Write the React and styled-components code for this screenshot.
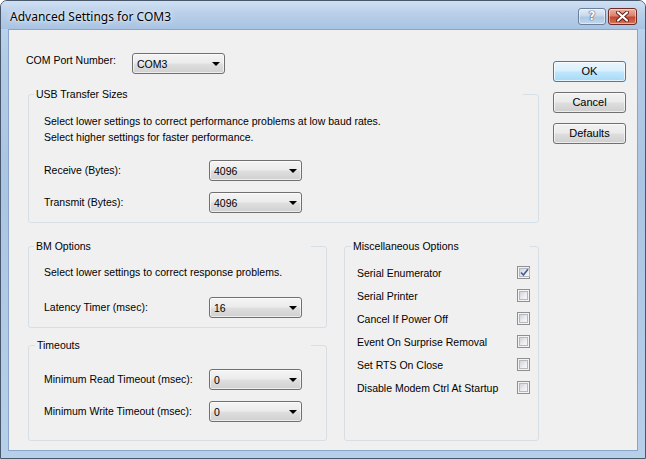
import React from "react";
import styled, { createGlobalStyle } from "styled-components";

const Global = createGlobalStyle`
  html, body { margin: 0; padding: 0; background: #ffffff; }
  body { font-family: "Liberation Sans", Arial, sans-serif; font-size: 10.5px; color: #000; }
  * { box-sizing: border-box; }
`;

const Window = styled.div`
  width: 646px;
  height: 459px;
  display: flex;
  flex-direction: column;
  border: 1px solid #48576a;
  border-radius: 7px 7px 0 0;
  background: linear-gradient(180deg, #c6d9ef 0%, #b2cbe7 12%, #aac5e3 40%, #b8cfea 100%);
  overflow: hidden;
`;

const TitleBar = styled.div`
  height: 28px;
  display: flex;
  align-items: center;
  justify-content: space-between;
  padding: 0 8px 0 9px;
  background: linear-gradient(180deg, #cfe0f3 0%, #b9cfe9 45%, #a8c3e2 100%);
`;

const Title = styled.span`
  font-family: "Noto Sans", "Liberation Sans", sans-serif;
  font-size: 12px;
  color: #000;
  text-shadow: 0 0 6px rgba(255, 255, 255, 0.95), 0 0 2px rgba(255, 255, 255, 0.8);
  margin-top: 3px;
`;

const Caption = styled.div`
  display: flex;
  gap: 2px;
  margin-top: 2px;
`;

const CapBtn = styled.div`
  width: ${(p) => p.$w}px;
  height: 17px;
  border-radius: 3px;
  border: 1px solid ${(p) => (p.$red ? "#6e2b24" : "#6a7f9b")};
  background: ${(p) =>
    p.$red
      ? "linear-gradient(180deg, #eab1a4 0%, #d88370 45%, #c3472f 55%, #d0765f 100%)"
      : "linear-gradient(180deg, #e4edf7 0%, #c9d9ec 45%, #aec6e2 55%, #c4d7ec 100%)"};
  box-shadow: inset 0 0 0 1px rgba(255, 255, 255, 0.45);
  display: flex;
  align-items: center;
  justify-content: center;
`;

const HelpGlyph = styled.span`
  font-family: "DejaVu Sans", sans-serif;
  font-weight: bold;
  font-size: 12px;
  line-height: 12px;
  color: #ffffff;
  text-shadow: 0 0 1px #3b4f6b, 0 0 1px #3b4f6b, 0 0 1px #3b4f6b;
`;

const Client = styled.div`
  flex: 1;
  margin: 0 7px 7px 7px;
  border: 1px solid #8aa6c6;
  background: #f0f0f0;
  display: flex;
  padding: 23px 0 9px 17px;
`;

const Main = styled.div`
  width: 513px;
  display: flex;
  flex-direction: column;
`;

const PortRow = styled.div`
  display: flex;
  align-items: flex-start;
  height: 21px;
`;

const Label = styled.span`
  display: inline-block;
  width: ${(p) => p.$w}px;
  flex-shrink: 0;
  line-height: 13px;
  padding-top: ${(p) => p.$top || 0}px;
`;

const Combo = styled.div`
  width: ${(p) => p.$w || 93}px;
  height: 21px;
  border: 1px solid #707070;
  border-radius: 3px;
  background: linear-gradient(180deg, #f4f4f4 0%, #ececec 45%, #dedede 55%, #d0d0d0 100%);
  box-shadow: inset 0 0 0 1px rgba(255, 255, 255, 0.6);
  display: flex;
  align-items: center;
  justify-content: space-between;
  padding: 0 4px 0 4px;
  flex-shrink: 0;
`;

const ComboText = styled.span`
  line-height: 13px;
  padding-top: 1px;
`;

const Arrow = styled.span`
  width: 0;
  height: 0;
  border-left: 4px solid transparent;
  border-right: 4px solid transparent;
  border-top: 4px solid #000;
`;

const Group = styled.div`
  border: 1px solid #d5dfe5;
  border-radius: 3px;
  margin-top: ${(p) => p.$mt || 0}px;
  padding: 0 ${(p) => p.$pr || 15}px 0 ${(p) => p.$pl || 15}px;
  display: flex;
  flex-direction: column;
  ${(p) => (p.$grow ? "flex: 1;" : "")}
  ${(p) => (p.$w ? `width: ${p.$w}px; flex-shrink: 0;` : "")}
  ${(p) => (p.$pb ? `padding-bottom: ${p.$pb}px;` : "")}
`;

const Legend = styled.span`
  display: table;
  margin: -7px 0 0 ${(p) => p.$ml || -8}px;
  padding: 0 2px;
  line-height: 13px;
  background: #f0f0f0;
`;

const Desc = styled.div`
  margin-top: ${(p) => p.$mt || 0}px;
  line-height: ${(p) => p.$lh || 13}px;
`;

const FieldRow = styled.div`
  display: flex;
  align-items: center;
  height: 21px;
  margin-top: ${(p) => p.$mt || 0}px;
`;

const USBGroup = styled(Group)`
  margin-left: 2px;
`;

const Lower = styled.div`
  flex: 1;
  display: flex;
  gap: 17px;
  margin: 23px 0 0 2px;
`;

const LeftCol = styled.div`
  width: 299px;
  display: flex;
  flex-direction: column;
`;

const CheckRow = styled.div`
  height: 23px;
  display: flex;
  align-items: center;
  justify-content: space-between;
`;

const CheckList = styled.div`
  margin-top: 8px;
  display: flex;
  flex-direction: column;
`;

const Box = styled.span`
  width: 13px;
  height: 13px;
  border: 1px solid #8e8f8f;
  background: #f4f4f4;
  padding: 1px;
  display: flex;
`;

const BoxInner = styled.span`
  flex: 1;
  border: 1px solid #b5b9be;
  background: linear-gradient(135deg, #d1d4d8 0%, #eceef0 60%, #f7f7f7 100%);
  display: flex;
  align-items: center;
  justify-content: center;
`;

const ButtonCol = styled.div`
  margin: 8px 0 0 14px;
  display: flex;
  flex-direction: column;
  gap: 10px;
`;

const Button = styled.div`
  width: 73px;
  height: 21px;
  border-radius: 3px;
  border: 1px solid ${(p) => (p.$default ? "#3c7fb1" : "#707070")};
  background: ${(p) =>
    p.$default
      ? "linear-gradient(180deg, #eaf6fd 0%, #d9f0fc 45%, #bee6fd 55%, #a7d9f5 100%)"
      : "linear-gradient(180deg, #f2f2f2 0%, #ebebeb 45%, #dddddd 55%, #cfcfcf 100%)"};
  box-shadow: inset 0 0 0 1px rgba(255, 255, 255, ${(p) => (p.$default ? 0.7 : 0.6)});
  display: flex;
  align-items: center;
  justify-content: center;
  line-height: 13px;
  font-size: 11px;
`;

const ComboField = ({ label, value, mt }) => (
  <FieldRow $mt={mt}>
    <Label $w={165}>{label}</Label>
    <Combo>
      <ComboText>{value}</ComboText>
      <Arrow />
    </Combo>
  </FieldRow>
);

const Check = ({ checked }) => (
  <Box>
    <BoxInner>
      {checked && (
        <svg width="9" height="9" viewBox="0 0 9 9">
          <path d="M1 4.5 L3.4 7 L8 1.2" fill="none" stroke="#4a5f9c" strokeWidth="1.7" />
        </svg>
      )}
    </BoxInner>
  </Box>
);

const misc = [
  ["Serial Enumerator", true],
  ["Serial Printer", false],
  ["Cancel If Power Off", false],
  ["Event On Surprise Removal", false],
  ["Set RTS On Close", false],
  ["Disable Modem Ctrl At Startup", false],
];

export default function App() {
  return (
    <>
      <Global />
      <Window>
        <TitleBar>
          <Title>Advanced Settings for COM3</Title>
          <Caption>
            <CapBtn $w={28}>
              <HelpGlyph>?</HelpGlyph>
            </CapBtn>
            <CapBtn $w={29} $red>
              <svg width="13" height="11" viewBox="0 0 13 11">
                <path d="M2 1.5 L11 9.5 M11 1.5 L2 9.5" stroke="#5a1d15" strokeWidth="4" strokeLinecap="round" />
                <path d="M2 1.5 L11 9.5 M11 1.5 L2 9.5" stroke="#ffffff" strokeWidth="2.2" strokeLinecap="round" />
              </svg>
            </CapBtn>
          </Caption>
        </TitleBar>
        <Client>
          <Main>
            <PortRow>
              <Label $w={106} $top={1}>COM Port Number:</Label>
              <Combo>
                <ComboText>COM3</ComboText>
                <Arrow />
              </Combo>
            </PortRow>
            <USBGroup $mt={20} $pb={9}>
              <Legend $ml={-10}>USB Transfer Sizes</Legend>
              <Desc $mt={12} $lh={16}>
                Select lower settings to correct performance problems at low baud rates.
                <br />
                Select higher settings for faster performance.
              </Desc>
              <ComboField label="Receive (Bytes):" value="4096" mt={15} />
              <ComboField label="Transmit (Bytes):" value="4096" mt={11} />
            </USBGroup>
            <Lower>
              <LeftCol>
                <Group $pb={9}>
                  <Legend $ml={-10}>BM Options</Legend>
                  <Desc $mt={13}>Select lower settings to correct response problems.</Desc>
                  <ComboField label="Latency Timer (msec):" value="16" mt={18} />
                </Group>
                <Group $mt={17} $grow>
                  <Legend $ml={-9}>Timeouts</Legend>
                  <ComboField label="Minimum Read Timeout (msec):" value="0" mt={17} />
                  <ComboField label="Minimum Write Timeout (msec):" value="0" mt={11} />
                </Group>
              </LeftCol>
              <Group $w={195} $pl={12} $pr={8}>
                <Legend $ml={-6}>Miscellaneous Options</Legend>
                <CheckList>
                  {misc.map(([t, c]) => (
                    <CheckRow key={t}>
                      <span>{t}</span>
                      <Check checked={c} />
                    </CheckRow>
                  ))}
                </CheckList>
              </Group>
            </Lower>
          </Main>
          <ButtonCol>
            <Button $default>OK</Button>
            <Button>Cancel</Button>
            <Button>Defaults</Button>
          </ButtonCol>
        </Client>
      </Window>
    </>
  );
}
